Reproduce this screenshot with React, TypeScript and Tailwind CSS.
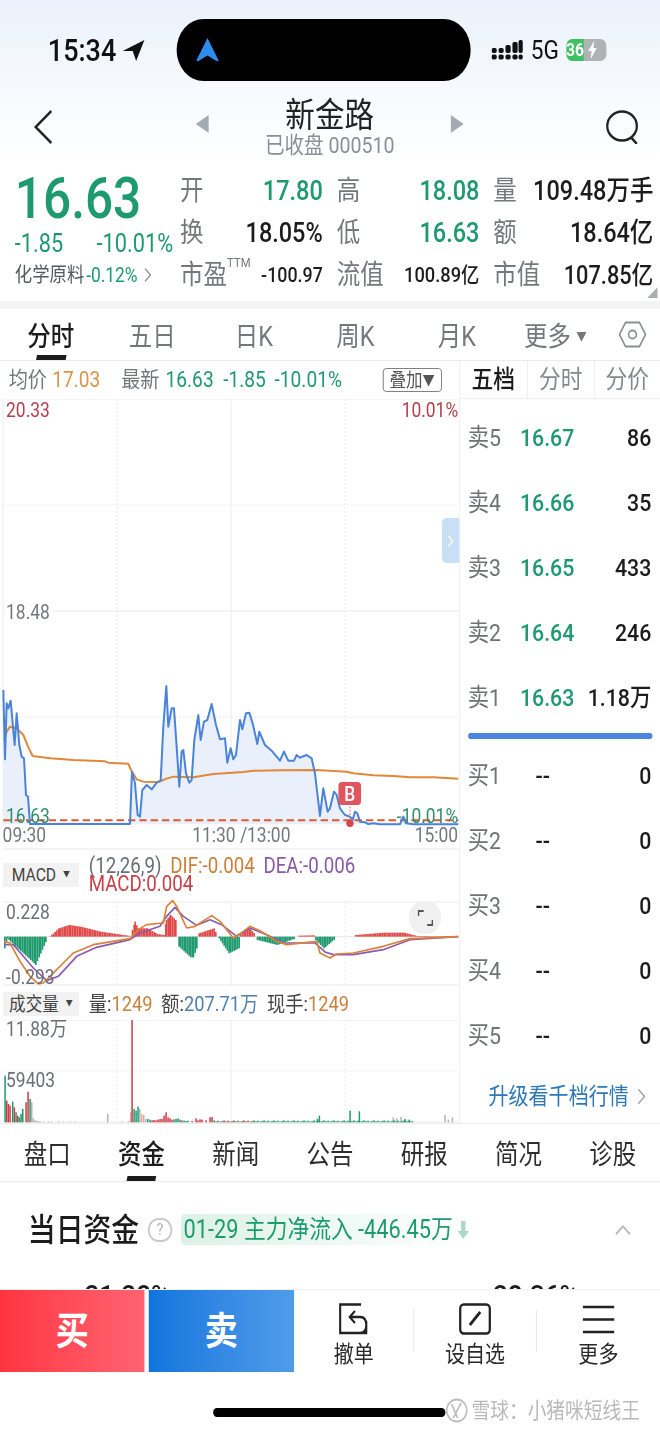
import { ChevronRight, ChevronUp } from "lucide-react";

type Pt = [number, number];

// chart points are read off the reference at 3x, so every group scales by 1/3
const pricePts: Pt[] = [
  [10, 90], [15, 298], [20, 130], [25, 145], [32, 122], [38, 190], [44, 255], [50, 160], [58, 255], [65, 290],
  [72, 295], [78, 405], [84, 410], [90, 492], [390, 492], [396, 335], [405, 370], [413, 465], [420, 470], [427, 390],
  [440, 375], [455, 388], [470, 368], [482, 362], [490, 200], [499, 78], [505, 200], [515, 145], [522, 145], [530, 260],
  [538, 380], [545, 275], [550, 270], [558, 340], [568, 368], [575, 360], [583, 240], [595, 165], [602, 240], [612, 185],
  [622, 180], [635, 132], [648, 195], [660, 238], [675, 235], [682, 308], [692, 265], [700, 298], [708, 285], [720, 180],
  [727, 208], [738, 160], [748, 158], [758, 190], [772, 252], [778, 215], [795, 255], [815, 272], [840, 302], [852, 275],
  [865, 302], [882, 302], [890, 285], [900, 293], [920, 285], [935, 295], [945, 340], [960, 468], [970, 385], [983, 455],
  [990, 445], [1002, 395], [1010, 405], [1020, 445], [1035, 465], [1050, 470], [1058, 480], [1065, 455], [1072, 460],
  [1080, 485], [1095, 487], [1105, 492], [1120, 490], [1140, 493], [1200, 493], [1210, 470], [1218, 490], [1240, 493], [1375, 493],
];

const avgPts: Pt[] = [
  [12, 240], [20, 215], [30, 200], [50, 205], [70, 225], [85, 262], [98, 288], [150, 295], [220, 300], [315, 304],
  [325, 308], [385, 311], [393, 330], [410, 358], [430, 365], [475, 366], [500, 356], [520, 350], [580, 352], [640, 342],
  [730, 336], [760, 332], [850, 331], [950, 330], [1040, 335], [1060, 340], [1120, 346], [1180, 348], [1230, 352], [1300, 352], [1375, 356],
];

const difPts: Pt[] = [
  [12, 280], [30, 285], [60, 340], [90, 385], [115, 408], [130, 405], [170, 365], [220, 315], [280, 290], [390, 272],
  [415, 245], [440, 230], [490, 225], [500, 175], [518, 158], [530, 175], [560, 240], [585, 235], [635, 203], [660, 220],
  [700, 270], [730, 250], [750, 235], [780, 248], [830, 280], [860, 290], [950, 280], [960, 315], [990, 330], [1010, 318],
  [1060, 315], [1150, 295], [1230, 272], [1375, 266],
];

const deaPts: Pt[] = [
  [12, 290], [40, 290], [70, 325], [100, 360], [140, 398], [175, 385], [230, 325], [290, 298], [390, 275], [420, 255],
  [480, 235], [500, 205], [525, 178], [550, 205], [590, 232], [630, 215], [665, 230], [710, 265], [750, 240], [800, 260],
  [850, 285], [945, 285], [975, 312], [1000, 320], [1060, 320], [1150, 305], [1230, 275], [1375, 266],
];

// macd histogram envelopes, [x, height above zero]
const macdSegs: Pt[][] = [
  [[12, -35], [20, -5], [30, -15], [90, -70], [105, -85], [140, -5]],
  [[148, 1], [175, 25], [205, 35], [240, 30], [300, 15], [390, 2]],
  [[395, 20], [403, 45], [412, 25], [440, 25], [470, 8], [490, 5], [497, 50], [510, 65], [525, 50], [528, 2]],
  [[535, -30], [570, -62], [578, -62], [592, -25]],
  [[595, 10], [640, 25], [650, 2]],
  [[655, -5], [685, -50], [715, -35], [718, -2]],
  [[720, 5], [745, 28], [765, 5]],
  [[770, -10], [830, -25], [885, -5]],
  [[895, 3], [945, 4]],
  [[945, -10], [970, -35], [1005, -5]],
  [[1065, 5], [1150, 12], [1210, 12], [1250, 2], [1370, 1]],
];

const macdBars: Pt[] = macdSegs.flatMap((seg) => {
  const out: Pt[] = [];
  for (let i = 0; i < seg.length - 1; i++) {
    const [x0, h0] = seg[i];
    const [x1, h1] = seg[i + 1];
    for (let x = x0; x < x1; x += 5) out.push([x, h0 + ((h1 - h0) * (x - x0)) / (x1 - x0)]);
  }
  return out;
});

const G = "#1f9a6f";
const R = "#cf3b47";
const A = "#b5b5b5";
const P = "#e3a3a6";

const volBars: [number, number, string][] = [
  [15, 140, G], [20, 65, R], [25, 55, R], [30, 50, R], [38, 62, G], [43, 45, R], [48, 30, G], [53, 20, R], [58, 15, G],
  [63, 25, G], [68, 40, G], [78, 60, R], [84, 92, R], [90, 70, G], [95, 60, A], [100, 12, A], [105, 6, A], [110, 4, A],
  [115, 3, A], [120, 3, A], [130, 2, A], [145, 3, A], [155, 2, A], [175, 3, A], [190, 2, A], [210, 2, A], [225, 2, A],
  [323, 26, A], [365, 2, A], [385, 3, A], [392, 30, P], [396, 307, R], [402, 40, G], [408, 35, G], [414, 47, G], [419, 40, A],
  [425, 25, P], [431, 22, P], [437, 10, A], [443, 10, G], [450, 8, G], [456, 6, R], [462, 7, R], [468, 6, R], [474, 8, R],
  [480, 10, R], [486, 10, R], [492, 20, R], [498, 30, R], [504, 15, R], [510, 12, R], [516, 8, R], [522, 9, G], [528, 10, G],
  [534, 12, G], [540, 8, G], [546, 6, R], [552, 5, G], [558, 4, G], [564, 5, G], [576, 4, R], [588, 12, R], [594, 6, R],
  [600, 9, R], [606, 8, R], [618, 6, R], [630, 15, R], [636, 16, R],
  [952, 10, G], [958, 20, G], [1050, 35, G], [1078, 33, G], [1180, 15, A], [1190, 12, A], [1203, 16, A], [1215, 10, G],
  [1228, 8, G], [1335, 22, A], [1345, 8, A], [1357, 15, A],
];
for (let x = 642; x < 1240; x += 6) {
  volBars.push([x, 2 + ((x * 7) % 5), x < 760 && x % 4 === 0 ? R : x % 3 === 0 ? G : x % 3 === 1 ? R : A]);
}

const line = (pts: Pt[]) => pts.map(([x, y]) => `${x},${y}`).join(" ");

const asks = [
  ["卖5", "16.67", "86"],
  ["卖4", "16.66", "35"],
  ["卖3", "16.65", "433"],
  ["卖2", "16.64", "246"],
  ["卖1", "16.63", "1.18万"],
];
const bids = ["买1", "买2", "买3", "买4", "买5"];

function StatusBar() {
  return (
    <div className="flex h-[96px] pt-[19px]">
      <div className="flex h-[62px] w-[203px] items-center pl-[55px]">
        <span className="text-[31px] leading-none font-medium text-[#111]">15:34</span>
        <svg width="26" height="21" viewBox="0 0 26 21" className="ml-[7px]">
          <path d="M25 0 L0 11 L11.5 11 L15.5 21 Z" fill="#111" />
        </svg>
      </div>
      <div className="flex h-[62px] w-[338px] items-center rounded-full bg-black pl-[22px]">
        <svg width="27" height="24" viewBox="0 0 27 24">
          <path d="M13.5 0 L26 22 Q26.5 24 24 23 L13.5 17.5 L3 23 Q0.5 24 1 22 Z" fill="#2e8cf0" />
        </svg>
      </div>
      <div className="flex h-[62px] flex-1 items-center pl-[24px]">
        <svg width="36" height="20" viewBox="0 0 36 20">
          <g fill="#111">
            <rect x="0" y="8" width="6" height="5" rx="2" />
            <rect x="0" y="14.5" width="6" height="5" rx="2" />
            <rect x="8" y="8" width="6" height="5" rx="2" />
            <rect x="8" y="14.5" width="6" height="5" rx="2" />
            <rect x="16" y="5" width="6" height="8" rx="2" />
            <rect x="16" y="14.5" width="6" height="5" rx="2" />
            <rect x="24" y="2" width="6" height="11" rx="2" />
            <rect x="24" y="14.5" width="6" height="5" rx="2" />
            <rect x="31" y="0" width="5" height="13" rx="2" />
            <rect x="31" y="14.5" width="5" height="5" rx="2" />
          </g>
        </svg>
        <span className="ml-[9px] text-[26px] leading-none text-[#111]">5G</span>
        <div className="ml-[9px] flex h-[22px] w-[46px] items-center overflow-hidden rounded-[7px] bg-[#b0b3b4] text-[18px] leading-none font-bold text-white">
          <span className="flex h-full w-[20px] items-center justify-end bg-[#3fc063]">36</span>
          <svg width="12" height="18" viewBox="0 0 12 18" className="ml-[4px]">
            <path d="M8 0 L1 10 H5 L4 18 L11 7 H7 Z" fill="#fff" />
          </svg>
        </div>
      </div>
    </div>
  );
}

function NavBar() {
  return (
    <div className="grid h-[66px] grid-cols-[225px_308px_1fr] items-start pt-[1px]">
      <svg width="24" height="34" viewBox="0 0 24 34" className="mt-[13px] ml-[38px]" fill="none">
        <path d="M21 1 L3 17 L21 33" stroke="#222" strokeWidth="2.6" />
      </svg>
      <div className="flex items-start justify-between">
        <svg width="15" height="18" viewBox="0 0 15 18" className="mt-[18px]">
          <path d="M15 0 V18 L0 9 Z" fill="#a3aab3" />
        </svg>
        <div className="flex flex-col items-center">
          <span className="text-[34px] leading-[36px] text-[#222]">新金路</span>
          <span className="text-[22.5px] leading-[24px] text-[#8a8f96]">已收盘 000510</span>
        </div>
        <svg width="15" height="18" viewBox="0 0 15 18" className="mt-[18px]">
          <path d="M0 0 V18 L15 9 Z" fill="#a3aab3" />
        </svg>
      </div>
      <div className="flex justify-end pt-[13px] pr-[24px]">
        <svg width="39" height="34" viewBox="0 0 39 34" fill="none" stroke="#222" strokeWidth="2.6">
          <ellipse cx="19" cy="16" rx="17" ry="14.5" />
          <path d="M29 27 L36 34" />
        </svg>
      </div>
    </div>
  );
}

function Stat({ label, value, small, tone }: { label: string; value: string; small?: boolean; tone?: string }) {
  return (
    <div className="flex items-center justify-between">
      <span className="text-[27px] leading-none text-[#74787d]">{label}</span>
      <span
        className={`leading-none font-medium ${small ? "text-[21px]" : "text-[27px]"} ${tone === "g" ? "text-[#1e9a70]" : "text-[#1c1c1c]"}`}
      >
        {value}
      </span>
    </div>
  );
}

function Quote() {
  return (
    <div className="relative flex h-[139px]">
      <div className="w-[207px] shrink-0 pl-[17px]">
        <div className="mt-[6px] h-[62px] text-[57px] leading-[62px] font-medium text-[#1e9a70]">16.63</div>
        <div className="flex w-[182px] justify-between text-[25px] leading-[28px] text-[#1e9a70]">
          <span>-1.85</span>
          <span>-10.01%</span>
        </div>
        <div className="mt-[4px] flex items-center text-[20px] leading-[26px] whitespace-nowrap">
          <span className="text-[#55595e]">化学原料</span>
          <span className="ml-[2px] text-[#1e9a70]">-0.12%</span>
          <ChevronRight size={24} className="text-[#8a8f96]" strokeWidth={1.4} />
        </div>
      </div>
      <div className="grid h-[134px] w-[544px] grid-cols-[164px_164px_184px] grid-rows-3 items-center gap-x-[16px] pt-[8px]">
        <Stat label="开" value="17.80" tone="g" />
        <Stat label="高" value="18.08" tone="g" />
        <Stat label="量" value="109.48万手" />
        <Stat label="换" value="18.05%" />
        <Stat label="低" value="16.63" tone="g" />
        <Stat label="额" value="18.64亿" />
        <div className="flex items-center justify-between">
          <span className="text-[27px] leading-none text-[#74787d]">
            市盈<sup className="align-super text-[13px]">TTM</sup>
          </span>
          <span className="text-[20.5px] leading-none font-medium text-[#1c1c1c]">-100.97</span>
        </div>
        <Stat label="流值" value="100.89亿" small />
        <div className="flex items-center justify-between">
          <span className="text-[27px] leading-none text-[#74787d]">市值</span>
          <span className="text-[25px] leading-none font-medium text-[#1c1c1c]">107.85亿</span>
        </div>
      </div>
      <svg width="12" height="11" viewBox="0 0 12 11" className="absolute right-[3px] bottom-[3px]">
        <path d="M12 0 V11 H0 Z" fill="#a9afb5" />
      </svg>
    </div>
  );
}

function ChartTabs() {
  const tabs = ["分时", "五日", "日K", "周K", "月K"];
  return (
    <div className="flex h-[52px] items-center border-b border-[#ececec]">
      {tabs.map((t, i) => (
        <div key={t} className="relative flex h-full w-[116.7px] items-center justify-center pt-[5px]">
          <span className={`text-[27px] leading-none ${i === 0 ? "font-medium text-[#1c1c1c]" : "text-[#74787d]"}`}>{t}</span>
          {i === 0 && <span className="absolute bottom-0 left-[42px] h-[5px] w-[34px] -skew-x-12 bg-[#1c1c1c]" />}
        </div>
      ))}
      <div className="flex w-[110px] items-center justify-center gap-[6px] pt-[5px]">
        <span className="text-[27px] leading-none text-[#74787d]">更多</span>
        <span className="text-[12px] leading-none text-[#74787d]">▼</span>
      </div>
      <svg width="34" height="27" viewBox="0 0 34 27" fill="none" stroke="#8a8f96" strokeWidth="1.8" className="ml-[17px]">
        <path d="M9 1.5 H25 L32 13.5 L25 25.5 H9 L2 13.5 Z" />
        <ellipse cx="17" cy="13.5" rx="4.5" ry="4" />
      </svg>
    </div>
  );
}

function PriceChart() {
  return (
    <div className="relative h-[451px]">
      <svg viewBox="0 0 459 451" preserveAspectRatio="none" className="block h-full w-full">
        <g stroke="#ececec" strokeWidth="1">
          <path d="M3 0 H459 M3 212 H459 M3 424 H459 M3 0 V424 M231 0 V424" />
          <path d="M3 106 H459 M3 318 H459 M117 0 V424 M345 0 V424" strokeDasharray="2 2" />
          <path d="M3 450 H459" />
        </g>
        <g transform="translate(0 261) scale(0.3333)" fill="none">
          <polygon points={`10,493 ${line(pricePts)} 1375,493`} fill="#e9f0fb" />
          <path d="M10 481 H1375" stroke="#dd5a2e" strokeWidth="6" strokeDasharray="22 12" />
          <polyline points={line(avgPts)} stroke="#e0883a" strokeWidth="6" strokeLinejoin="round" />
          <polyline points={line(pricePts)} stroke="#4a84d8" strokeWidth="6" strokeLinejoin="round" />
          <circle cx="1050" cy="490" r="11" fill="#d8434f" />
          <path d="M1050 440 V478" stroke="#e2636b" strokeWidth="3" strokeDasharray="5 5" />
        </g>
      </svg>
      <span className="absolute top-[1px] left-[7px] text-[20px] leading-[20px] text-[#b5404c]">20.33</span>
      <span className="absolute top-[1px] right-[1px] text-[20px] leading-[20px] text-[#b5404c]">10.01%</span>
      <span className="absolute top-[203px] left-[7px] bg-white pr-[4px] text-[20px] leading-[20px] text-[#74787d]">18.48</span>
      <span className="absolute top-[407px] left-[7px] text-[20px] leading-[20px] text-[#2f8f6d]">16.63</span>
      <span className="absolute top-[407px] right-[1px] text-[20px] leading-[20px] text-[#2f8f6d]">-10.01%</span>
      <span className="absolute top-[426px] left-[3px] text-[20px] leading-[20px] text-[#74787d]">09:30</span>
      <span className="absolute top-[426px] left-[221px] text-[20px] leading-[20px] whitespace-nowrap text-[#74787d]">11:30 /13:00</span>
      <span className="absolute top-[426px] right-[1px] text-[20px] leading-[20px] text-[#74787d]">15:00</span>
      <div className="absolute top-[119px] right-0 flex h-[45px] w-[20px] items-center justify-center rounded-l-[5px] bg-[#c8dff5]">
        <ChevronRight size={20} className="text-white" strokeWidth={1.5} />
      </div>
      <div className="absolute top-[383px] left-[389px] flex h-[23px] w-[26px] items-center justify-center rounded-[4px] bg-[#e0565e] text-[20px] leading-none font-medium text-white">
        B
      </div>
    </div>
  );
}

function MacdPane() {
  return (
    <>
      <div className="relative h-[50px]">
        <div className="absolute top-[13px] left-[3px] flex h-[24px] w-[88px] items-center justify-center gap-[8px] bg-[#f2f2f2] text-[18px] leading-none text-[#444]">
          MACD <span className="text-[8px]">▼</span>
        </div>
        <div className="pt-[7px] pl-[102px] text-[21.5px] leading-[18px]">
          <div className="flex gap-[10px] whitespace-nowrap">
            <span className="text-[#6b6f74]">(12,26,9)</span>
            <span className="text-[#cf7f3a]">DIF:-0.004</span>
            <span className="text-[#8a5aa8]">DEA:-0.006</span>
          </div>
          <div className="text-[#c93f45]">MACD:0.004</div>
        </div>
      </div>
      <div className="relative h-[87px]">
        <svg viewBox="0 0 459 87" preserveAspectRatio="none" className="block h-full w-full">
          <g stroke="#ececec" strokeWidth="1">
            <path d="M3 2 H459 M3 85 H459 M231 2 V85" />
            <path d="M117 2 V85 M345 2 V85" strokeDasharray="2 2" />
          </g>
          <g transform="translate(0 -52) scale(0.3333)" fill="none">
            <path d="M10 266 H1375" stroke="#d9d9d9" strokeWidth="2" />
            {macdBars.map(([x, h]) => (
              <rect key={x} x={x} y={h > 0 ? 266 - h : 266} width="5" height={Math.abs(h)} fill={h > 0 ? "#e04a4a" : "#1f9a6f"} />
            ))}
            <polyline points={line(deaPts)} stroke="#8d5bb0" strokeWidth="5" strokeLinejoin="round" />
            <polyline points={line(difPts)} stroke="#d9823a" strokeWidth="5" strokeLinejoin="round" />
          </g>
        </svg>
        <span className="absolute top-[2px] left-[7px] text-[20px] leading-[20px] text-[#6b6f74]">0.228</span>
        <span className="absolute top-[67px] left-[7px] text-[20px] leading-[20px] text-[#6b6f74]">-0.293</span>
        <div className="absolute top-[1px] left-[470px] flex h-[33px] w-[37px] items-center justify-center rounded-full bg-[#f0f0f0]">
          <svg width="18" height="16" viewBox="0 0 18 16" fill="none" stroke="#555" strokeWidth="1.8">
            <path d="M1 6 V1 H7 M17 10 V15 H11" />
          </svg>
        </div>
      </div>
    </>
  );
}

function VolumePane() {
  return (
    <>
      <div className="relative h-[33px]">
        <div className="absolute top-[5px] left-[3px] flex h-[24px] w-[88px] items-center justify-center gap-[8px] bg-[#f2f2f2] text-[19px] leading-none text-[#444]">
          成交量 <span className="text-[8px]">▼</span>
        </div>
        <div className="flex h-full items-center gap-[10px] pt-[1px] pl-[102px] text-[21px] leading-none whitespace-nowrap text-[#444]">
          <span>
            量:<span className="text-[#c9803f]">1249</span>
          </span>
          <span>
            额:<span className="text-[#4f7fae]">207.71万</span>
          </span>
          <span>
            现手:<span className="text-[#c9803f]">1249</span>
          </span>
        </div>
      </div>
      <div className="relative h-[103px]">
        <svg viewBox="0 0 459 103" preserveAspectRatio="none" className="block h-full w-full">
          <g stroke="#ececec" strokeWidth="1">
            <path d="M3 0 H459 M231 0 V102 M3 102 H459" />
            <path d="M3 51 H459 M117 0 V102 M345 0 V102" strokeDasharray="2 2" />
          </g>
          <g transform="scale(0.3333)">
            {volBars.map(([x, h, c]) => (
              <rect key={x} x={x - 2} y={307 - h} width="4.5" height={h} fill={c} />
            ))}
          </g>
        </svg>
        <span className="absolute top-[-1px] left-[7px] text-[20px] leading-[20px] text-[#6b6f74]">11.88万</span>
        <span className="absolute top-[50px] left-[7px] text-[20px] leading-[20px] text-[#6b6f74]">59403</span>
      </div>
    </>
  );
}

function OrderBook() {
  return (
    <div className="flex w-[231px] flex-col border-l border-[#ececec]">
      <div className="flex h-[38px] items-center border-b border-[#ececec] text-[25px] leading-none">
        <span className="flex h-full w-[77px] items-center justify-center font-medium text-[#1c1c1c]">五档</span>
        <span className="flex h-full w-[77px] items-center justify-center border-l border-[#ececec] text-[#85898e]">分时</span>
        <span className="flex h-full flex-1 items-center justify-center border-l border-[#ececec] text-[#85898e]">分价</span>
      </div>
      <div className="pt-[7px] text-[24.5px] leading-none">
        {asks.map(([name, price, qty]) => (
          <div key={name} className="flex h-[65px] items-center pr-[10px] pl-[9px]">
            <span className="w-[60px] text-[#6f7377]">{name}</span>
            <span className="font-medium text-[#1e9a70]">{price}</span>
            <span className="ml-auto font-medium text-[#1c1c1c]">{qty}</span>
          </div>
        ))}
      </div>
      <div className="mx-[9px] mt-[2px] mb-[5px] h-[6px] rounded-full bg-[#4a88e0]" />
      <div className="text-[24.5px] leading-none">
        {bids.map((name) => (
          <div key={name} className="flex h-[65px] items-center pr-[10px] pl-[9px]">
            <span className="w-[60px] text-[#6f7377]">{name}</span>
            <span className="ml-[18px] font-medium text-[#1c1c1c]">--</span>
            <span className="ml-auto font-medium text-[#1c1c1c]">0</span>
          </div>
        ))}
      </div>
      <div className="flex h-[54px] items-center justify-end pr-[8px]">
        <span className="text-[23px] leading-none text-[#2c78b8]">升级看千档行情</span>
        <ChevronRight size={27} className="ml-[1px] text-[#9a9ea3]" strokeWidth={1.4} />
      </div>
    </div>
  );
}

function DetailTabs() {
  const tabs = ["盘口", "资金", "新闻", "公告", "研报", "简况", "诊股"];
  return (
    <div className="flex h-[59px] items-center border-y border-[#ececec]">
      {tabs.map((t, i) => (
        <div key={t} className="relative flex h-full w-[108.4px] items-center justify-center pt-[5px]">
          <span className={`text-[27px] leading-none ${i === 1 ? "font-medium text-[#1c1c1c]" : "text-[#2e2e2e]"}`}>{t}</span>
          {i === 1 && <span className="absolute bottom-0 left-[38px] h-[5px] w-[33px] -skew-x-12 bg-[#1c1c1c]" />}
        </div>
      ))}
    </div>
  );
}

function Funds() {
  return (
    <div className="h-[107px] overflow-hidden">
      <div className="mt-[32px] flex h-[31px] items-center pl-[32px]">
        <span className="text-[32px] leading-none font-medium text-[#1c1c1c]">当日资金</span>
        <span className="ml-[10px] flex h-[24px] w-[28px] items-center justify-center rounded-full border-2 border-[#c9c9c9] text-[17px] leading-none text-[#b5b5b5]">
          ?
        </span>
        <div className="ml-[10px] flex h-[31px] items-center rounded-[5px] bg-gradient-to-r from-[#dcf1e8] to-white pr-[2px] pl-[3px] text-[25px] leading-none whitespace-nowrap text-[#1e9a70]">
          01-29 主力净流入 -446.45万
          <svg width="13" height="18" viewBox="0 0 13 18" className="ml-[6px]" fill="#a9d9c4">
            <path d="M4 0 H9 V10 H13 L6.5 18 L0 10 H4 Z" />
          </svg>
        </div>
        <ChevronUp size={30} strokeWidth={1.5} className="mr-[28px] ml-auto text-[#b5b9bd]" />
      </div>
      <div className="mt-[34px] flex pl-[97px] text-[30px] leading-[34px] font-medium text-[#1c1c1c]">
        <span>21.28%</span>
        <span className="ml-[371px]">28.36%</span>
      </div>
    </div>
  );
}

function BottomBar() {
  return (
    <div className="flex h-[83px] border-t border-[#f0f0f0] bg-white">
      <div className="flex h-full w-[166px] items-center justify-center bg-gradient-to-r from-[#ff3340] to-[#ff6271] text-[38px] leading-none font-bold text-white">
        买
      </div>
      <div className="ml-[5px] flex h-full w-[167px] items-center justify-center bg-gradient-to-r from-[#0f75dc] to-[#4f9cea] text-[38px] leading-none font-bold text-white">
        卖
      </div>
      <div className="flex w-[137px] flex-col items-center pt-[13px]">
        <svg width="38" height="32" viewBox="0 0 38 32" fill="none" stroke="#222" strokeWidth="2.4">
          <path d="M27 1.5 H3 V30 H33 V18 M20 8 L14 14 L20 20 M14 14 H26 Q33 14 33 22 Q33 30 26 30" />
        </svg>
        <span className="mt-[8px] text-[23px] leading-none text-[#2a2a2a]">撤单</span>
      </div>
      <div className="my-[20px] w-px bg-[#e4e4e4]" />
      <div className="flex w-[140px] flex-col items-center pt-[13px]">
        <svg width="38" height="32" viewBox="0 0 38 32" fill="none" stroke="#222" strokeWidth="2.6">
          <rect x="2" y="1.5" width="34" height="29" rx="4" />
          <path d="M13 22 L25 9" strokeWidth="3.2" />
        </svg>
        <span className="mt-[8px] text-[23px] leading-none text-[#2a2a2a]">设自选</span>
      </div>
      <div className="my-[20px] w-px bg-[#e4e4e4]" />
      <div className="flex flex-1 flex-col items-center pt-[15px]">
        <svg width="38" height="29" viewBox="0 0 38 29" stroke="#222" strokeWidth="2.4">
          <path d="M1 2 H37 M1 14.5 H37 M1 27 H37" />
        </svg>
        <span className="mt-[9px] text-[23px] leading-none text-[#2a2a2a]">更多</span>
      </div>
    </div>
  );
}

function HomeArea() {
  return (
    <div className="relative h-[58px] bg-white">
      <div className="absolute top-[36px] left-[245px] h-[9px] w-[267px] rounded-full bg-black" />
      <div className="absolute top-[26px] left-[512px] flex items-center gap-[4px] text-[21.5px] leading-none whitespace-nowrap text-[#b9b9b9]">
        <svg width="26" height="25" viewBox="0 0 26 25" fill="none" stroke="#bdbdbd" strokeWidth="1.8">
          <ellipse cx="13" cy="12.5" rx="11.5" ry="11" />
          <path d="M7 6 L14 20 M18 5 L9 20" />
        </svg>
        雪球：小猪咪短线王
      </div>
    </div>
  );
}

export default function App() {
  return (
    <div className="h-[1431px] w-[660px] overflow-hidden bg-white">
      {/* the shot is squeezed sideways, so lay out wide and squeeze the whole page */}
      <div className="h-[1431px] w-[758.6px] origin-top-left scale-x-[0.87] font-[family-name:Roboto,'Noto_Sans_CJK_SC',sans-serif]">
        <div className="bg-gradient-to-b from-[#ebf2fb] to-white">
          <StatusBar />
          <NavBar />
        </div>
        <Quote />
        <div className="h-[8px] bg-[#f4f4f4]" />
        <ChartTabs />
        <div className="flex h-[762px]">
          <div className="w-[527.6px] shrink-0">
            <div className="flex h-[38px] items-center pl-[10px] text-[22px] leading-none whitespace-nowrap">
              <span className="text-[#74787d]">均价</span>
              <span className="ml-[6px] text-[#d9964a]">17.03</span>
              <span className="ml-[24px] text-[#74787d]">最新</span>
              <span className="ml-[7px] text-[#1e9a70]">16.63</span>
              <span className="ml-[11px] text-[#1e9a70]">-1.85</span>
              <span className="ml-[10px] text-[#1e9a70]">-10.01%</span>
              <span className="mr-[20px] ml-auto flex h-[24px] w-[68px] items-center justify-center rounded-[4px] border border-[#777] text-[19px] text-[#555]">
                叠加<span className="text-[14px]">▼</span>
              </span>
            </div>
            <PriceChart />
            <MacdPane />
            <VolumePane />
          </div>
          <OrderBook />
        </div>
        <DetailTabs />
        <Funds />
        <BottomBar />
        <HomeArea />
      </div>
    </div>
  );
}
